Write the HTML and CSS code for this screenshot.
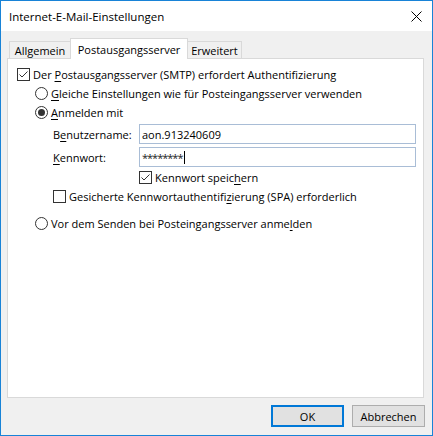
FILE: index.html
```html
<!DOCTYPE html>
<html lang="de">
<head>
<meta charset="utf-8">
<title>Internet-E-Mail-Einstellungen</title>
<link rel="stylesheet" href="styles.css">
</head>
<body>
<div class="window">
  <div class="titlebar">
    <span class="title">Internet-E-Mail-Einstellungen</span>
    <svg class="close" width="11" height="11" viewBox="0 0 11 11" aria-label="Schließen">
      <path d="M0.5 0.5 L10.5 10.5 M10.5 0.5 L0.5 10.5" stroke="#000" stroke-width="1" fill="none"/>
    </svg>
  </div>

  <div class="body">
    <div class="tabs">
      <div class="tab tab-first">Allgemein</div>
      <div class="tab tab-active">Postausgangsserver</div>
      <div class="tab tab-last">Erweitert</div>
    </div>

    <div class="panel">
      <div class="row row-auth">
        <svg class="box" width="13" height="13" viewBox="0 0 13 13">
          <rect x="0.5" y="0.5" width="12" height="12" fill="#fff" stroke="#333"/>
          <path d="M2.5 6.5 L5 9 L10.5 3.5" stroke="#333" stroke-width="1" fill="none"/>
        </svg>
        <span>Der <u>P</u>ostausgangsserver (SMTP) erfordert Authentifizierung</span>
      </div>

      <div class="row row-radio">
        <svg class="radio" width="13" height="13" viewBox="0 0 13 13">
          <circle cx="6.5" cy="6.5" r="6" fill="#fff" stroke="#333"/>
        </svg>
        <span><u>G</u>leiche Einstellungen wie für Posteingangsserver verwenden</span>
      </div>

      <div class="row row-radio">
        <svg class="radio" width="13" height="13" viewBox="0 0 13 13">
          <circle cx="6.5" cy="6.5" r="6" fill="#fff" stroke="#333"/>
          <circle cx="6.5" cy="6.5" r="3.5" fill="#333"/>
        </svg>
        <span><u>A</u>nmelden mit</span>
      </div>

      <div class="field-row field-user">
        <label class="field-label">B<u>e</u>nutzername:</label>
        <div class="input">aon.913240609</div>
      </div>

      <div class="field-row field-pass">
        <label class="field-label"><u>K</u>ennwort:</label>
        <div class="input"><span class="dots">********</span><span class="caret"></span></div>
      </div>

      <div class="row row-save">
        <svg class="box" width="13" height="13" viewBox="0 0 13 13">
          <rect x="0.5" y="0.5" width="12" height="12" fill="#fff" stroke="#333"/>
          <path d="M2.5 6.5 L5 9 L10.5 3.5" stroke="#333" stroke-width="1" fill="none"/>
        </svg>
        <span>Kennwort speic<u>h</u>ern</span>
      </div>

      <div class="row row-spa">
        <svg class="box" width="13" height="13" viewBox="0 0 13 13">
          <rect x="0.5" y="0.5" width="12" height="12" fill="#fff" stroke="#333"/>
        </svg>
        <span>Gesicherte Kennwortauthentifi<u>z</u>ierung (SPA) erforderlich</span>
      </div>

      <div class="row row-radio row-before">
        <svg class="radio" width="13" height="13" viewBox="0 0 13 13">
          <circle cx="6.5" cy="6.5" r="6" fill="#fff" stroke="#333"/>
        </svg>
        <span>Vor dem Senden bei Posteingangsserver anme<u>l</u>den</span>
      </div>
    </div>

    <div class="footer">
      <button class="btn btn-default">OK</button>
      <button class="btn">Abbrechen</button>
    </div>
  </div>
</div>
</body>
</html>
```

FILE: styles.css
```css
* {
  box-sizing: border-box;
}

body {
  margin: 0;
  font-family: "Open Sans", "Liberation Sans", sans-serif;
  font-size: 11px;
  color: #000;
}

u {
  text-decoration-thickness: 1px;
  text-underline-offset: 2px;
}

/* dialog frame */
.window {
  width: 433px;
  height: 436px;
  border: 1px solid #1883d7;
  background: #f0f0f0;
  display: flex;
  flex-direction: column;
}

.titlebar {
  flex: none;
  height: 30px;
  background: #fff;
  display: flex;
  align-items: center;
  padding-left: 8px;
}

.title {
  font-size: 11.5px;
}

.close {
  margin-left: auto;
  margin-right: 10px;
}

.body {
  flex: 1;
  display: flex;
  flex-direction: column;
  padding: 7px 8px 0 6px;
}

/* tab strip */
.tabs {
  display: flex;
  align-items: flex-end;
  height: 20px;
  padding-left: 2px;
}

.tab {
  height: 17px;
  border: 1px solid #d9d9d9;
  border-bottom: none;
  background: #f0f0f0;
  display: flex;
  align-items: center;
  justify-content: center;
}

.tab-first {
  width: 61px;
  border-right: none;
}

.tab-active {
  width: 118px;
  height: 21px;
  margin-bottom: -1px;
  background: #fff;
  position: relative;
  z-index: 1;
}

.tab-last {
  width: 54px;
  border-left: none;
}

/* tab page */
.panel {
  flex: none;
  height: 340px;
  border: 1px solid #d9d9d9;
  background: #fff;
  padding: 6px 0 0 9px;
}

.row {
  display: flex;
  align-items: center;
  height: 19px;
  white-space: nowrap;
}

.box,
.radio {
  flex: none;
  margin-right: 3px;
}

.row-radio {
  margin-left: 18px;
}

.row-before {
  margin-top: 8px;
}

.row-save {
  margin-left: 122px;
  margin-top: 1px;
}

.row-spa {
  margin-left: 36px;
}

.field-row {
  display: flex;
  align-items: center;
  height: 20px;
  margin-left: 36px;
}

.field-user {
  margin-top: 2px;
}

.field-pass {
  margin-top: 3px;
}

.field-label {
  width: 86px;
  flex: none;
}

.input {
  width: 277px;
  height: 20px;
  border: 1px solid #a9bdd6;
  background: #fff;
  padding-left: 2px;
  display: flex;
  align-items: center;
}

.dots {
  letter-spacing: -1px;
  color: #222;
}

.caret {
  width: 1px;
  height: 13px;
  background: #000;
  margin-left: 2px;
}

/* dialog buttons */
.footer {
  display: flex;
  justify-content: flex-end;
  gap: 8px;
  margin-top: 7px;
  margin-right: -1px;
}

.btn {
  width: 73px;
  height: 22px;
  padding: 0;
  font-family: inherit;
  font-size: 11px;
  color: #000;
  background: #e1e1e1;
  border: 1px solid #adadad;
}

.btn-default {
  border: 2px solid #0078d7;
}
```
